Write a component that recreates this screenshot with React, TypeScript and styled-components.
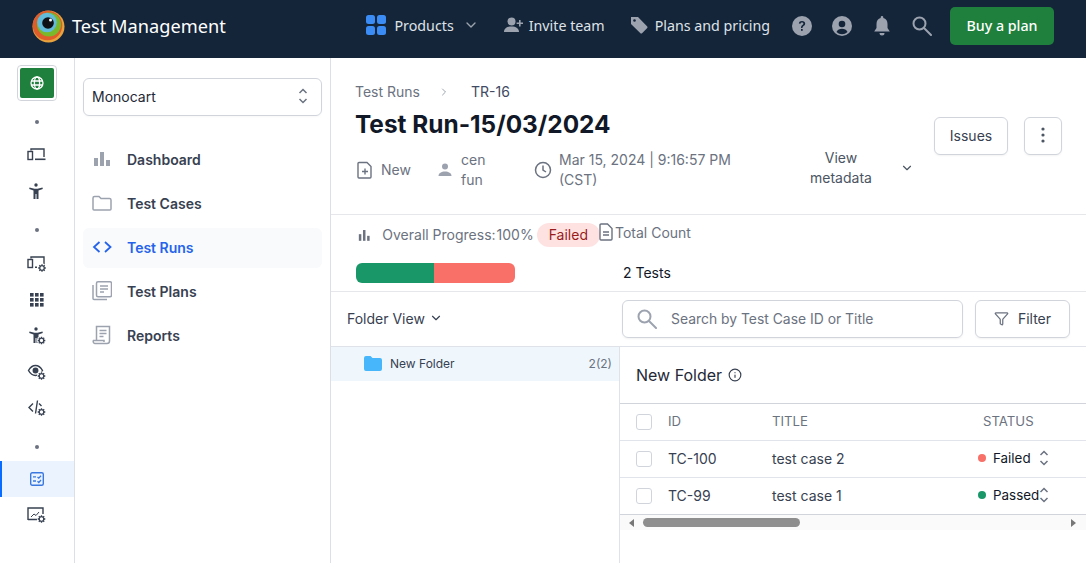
import styled, { createGlobalStyle } from "styled-components";
import { ChevronDown, ChevronRight, Info, Filter } from "lucide-react";

const GlobalStyle = createGlobalStyle`
  html, body {
    margin: 0;
    padding: 0;
    background: #fff;
    overflow: hidden;
  }
  * { box-sizing: border-box; }
  body { font-family: Inter, "Noto Sans", sans-serif; }
`;

const Page = styled.div`
  width: 1086px;
  height: 563px;
  display: flex;
  flex-direction: column;
  overflow: hidden;
`;

const Header = styled.header`
  height: 58px;
  flex: none;
  background: #14253a;
  display: flex;
  align-items: center;
  padding: 0 32px 6px 32px;
  color: #fff;
`;

const Brand = styled.div`
  display: flex;
  align-items: center;
  gap: 7px;
  font-family: "Noto Sans", sans-serif;
  font-size: 18.2px;
`;

const HeaderNav = styled.nav`
  margin-left: auto;
  display: flex;
  align-items: center;
  font-family: "Noto Sans", sans-serif;
  font-size: 14.25px;
`;

const HeaderLink = styled.span<{ $gap?: number; $mr?: number }>`
  display: flex;
  align-items: center;
  gap: ${(p) => p.$gap ?? 6}px;
  margin-right: ${(p) => p.$mr ?? 25}px;
  padding-bottom: 2px;
  color: #dfe2e7;
  white-space: nowrap;
`;

const HeaderIcon = styled.span<{ $mr?: number }>`
  display: flex;
  margin-right: ${(p) => p.$mr ?? 18}px;
`;

const BuyButton = styled.button`
  width: 104px;
  height: 38px;
  margin-left: 8px;
  padding: 0 0 2px;
  border: 0;
  border-radius: 5px;
  background: #1f7f3c;
  color: #fff;
  font-family: "Noto Sans", sans-serif;
  font-size: 14.25px;
  font-weight: 500;
`;

const Body = styled.div`
  flex: 1;
  display: flex;
  min-height: 0;
`;

const Rail = styled.aside`
  width: 75px;
  flex: none;
  border-right: 1px solid #dcdfe6;
  display: flex;
  flex-direction: column;
  align-items: center;
  padding-top: 7px;
`;

const GlobeFrame = styled.div`
  width: 40px;
  height: 36px;
  padding: 2px;
  margin: 0 1px 1px 0;
  border: 1px solid #d1d5db;
  border-radius: 4px;
`;

const GlobeButton = styled.div`
  width: 100%;
  height: 100%;
  background: #1f7f3c;
  border-radius: 2px;
  display: flex;
  align-items: center;
  justify-content: center;
  color: #fff;
`;

const RailDot = styled.i<{ $mb?: number; $mt?: number }>`
  width: 4px;
  height: 4px;
  flex: none;
  border-radius: 50%;
  background: #6b7280;
  margin: ${(p) => p.$mt ?? 18}px 0 ${(p) => p.$mb ?? 14}px;
`;

const RailItem = styled.div<{ $active?: boolean }>`
  width: 74px;
  height: 36px;
  flex: none;
  display: flex;
  align-items: center;
  justify-content: center;
  color: #374151;
  background: ${(p) => (p.$active ? "#ebf3ff" : "transparent")};
  border-left: 2px solid ${(p) => (p.$active ? "#0a6cff" : "transparent")};
  padding-right: 2px;
`;

const SideNav = styled.aside`
  width: 256px;
  flex: none;
  border-right: 1px solid #dcdfe6;
  padding: 20px 8px 0 8px;
`;

const ProjectSelect = styled.div`
  height: 38px;
  border: 1px solid #d1d5db;
  border-radius: 6px;
  display: flex;
  align-items: center;
  justify-content: space-between;
  padding: 0 13px 2px 8px;
  font-size: 14px;
  color: #1f2937;
  margin-bottom: 24px;
  box-shadow: 0 1px 2px rgba(0, 0, 0, 0.03);
`;

const SideLink = styled.div<{ $active?: boolean }>`
  height: 40px;
  margin-bottom: 4px;
  border-radius: 6px;
  display: flex;
  align-items: center;
  gap: 15px;
  padding: 0 0 2px 9px;
  font-size: 14px;
  font-weight: 600;
  color: ${(p) => (p.$active ? "#2563eb" : "#374151")};
  background: ${(p) => (p.$active ? "#f9fafb" : "transparent")};
`;

const SideIcon = styled.svg<{ $active?: boolean }>`
  width: 20px;
  height: 20px;
  flex: none;
  color: ${(p) => (p.$active ? "#2563eb" : "#9ca3af")};
`;

const Main = styled.main`
  flex: 1;
  min-width: 0;
  display: flex;
  flex-direction: column;
`;

const Summary = styled.section`
  height: 157px;
  flex: none;
  border-bottom: 1px solid #e5e7eb;
  padding: 24px 24px 0 24px;
  display: flex;
  justify-content: space-between;
`;

const SummaryLeft = styled.div`
  display: flex;
  flex-direction: column;
`;

const Crumbs = styled.div`
  display: flex;
  align-items: center;
  font-size: 14px;
  line-height: 20px;
  color: #6b7280;
`;

const CrumbSep = styled.span`
  display: flex;
  width: 51px;
  justify-content: center;
  padding-right: 2px;
  color: #9ca3af;
`;

const CrumbCurrent = styled.span`
  color: #3f4a63;
`;

const Title = styled.h1`
  margin: 6px 0 0;
  font-size: 24.4px;
  line-height: 32px;
  font-weight: 700;
  color: #111827;
`;

const MetaRow = styled.div`
  display: flex;
  align-items: center;
  margin-top: 8px;
  padding-left: 2px;
  font-size: 14px;
  line-height: 20px;
  color: #6b7280;
`;

const MetaItem = styled.div<{ $w: number; $gap?: number }>`
  width: ${(p) => p.$w}px;
  display: flex;
  align-items: center;
  gap: ${(p) => p.$gap ?? 6}px;
  flex: none;
`;

const ViewMeta = styled.div`
  display: flex;
  align-items: center;
  gap: 23px;
  margin: 0 0 4px 9px;
  color: #4b5563;
  text-align: center;
`;

const MetaLabel = styled.div`
  width: 72px;
`;

const SummaryActions = styled.div`
  display: flex;
  gap: 16px;
  margin-top: 35px;
`;

const GhostButton = styled.button<{ $w: number; $gap?: number }>`
  width: ${(p) => p.$w}px;
  height: 38px;
  border: 1px solid #d1d5db;
  border-radius: 6px;
  background: #fff;
  color: #374151;
  font-family: inherit;
  font-size: 14px;
  display: flex;
  align-items: center;
  justify-content: center;
  gap: ${(p) => p.$gap ?? 7}px;
  padding: 0 0 2px;
  box-shadow: 0 1px 2px rgba(0, 0, 0, 0.05);
`;

const Progress = styled.section`
  height: 77px;
  flex: none;
  border-bottom: 1px solid #e5e7eb;
  padding-left: 25px;
  display: flex;
`;

const ProgressCol = styled.div`
  width: 244px;
  flex: none;
`;

const ProgressHead = styled.div`
  display: flex;
  align-items: center;
  height: 23px;
  margin-top: 8px;
  padding-left: 2px;
  font-size: 14px;
  color: #6b7280;
  white-space: nowrap;
`;

const ProgressLabel = styled.span`
  margin-left: 11px;
`;

const ProgressValue = styled.span`
  margin-left: 1px;
`;

const FailedPill = styled.span`
  height: 24px;
  padding: 0 12px;
  border-radius: 12px;
  background: #fee2e2;
  color: #991b1b;
  margin-left: 3px;
  display: flex;
  align-items: center;
`;

const Bar = styled.div`
  width: 159px;
  height: 20px;
  margin-top: 17px;
  border-radius: 6px;
  overflow: hidden;
  display: flex;
`;

const BarPart = styled.div<{ $color: string; $w: number }>`
  width: ${(p) => p.$w}px;
  background: ${(p) => p.$color};
`;

const CountCol = styled.div`
  display: flex;
  flex-direction: column;
  font-size: 14px;
  margin-left: -1px;
`;

const CountHead = styled.div`
  height: 20px;
  margin-top: 7px;
  display: flex;
  align-items: center;
  gap: 2px;
  color: #6b7280;
`;

const CountValue = styled.div`
  margin-top: 21px;
  margin-left: 24px;
  line-height: 20px;
  color: #111827;
`;

const Toolbar = styled.section`
  height: 55px;
  flex: none;
  border-bottom: 1px solid #dfe3e9;
  display: flex;
  align-items: center;
  padding: 0 16px;
`;

const FolderView = styled.div`
  width: 275px;
  flex: none;
  display: flex;
  align-items: center;
  gap: 4px;
  padding-bottom: 2px;
  font-size: 14px;
  color: #374151;
`;

const SearchBox = styled.div`
  width: 341px;
  height: 38px;
  border: 1px solid #d1d5db;
  border-radius: 6px;
  display: flex;
  align-items: center;
  gap: 14px;
  padding-left: 14px;
  margin-right: 12px;
  font-size: 13.9px;
  color: #6b7280;
  box-shadow: 0 1px 2px rgba(0, 0, 0, 0.05);
`;

const Split = styled.section`
  flex: 1;
  display: flex;
  min-height: 0;
`;

const FolderPane = styled.div`
  width: 289px;
  flex: none;
  border-right: 1px solid #dfe3e9;
`;

const FolderRow = styled.div`
  height: 34px;
  background: #eff7fd;
  display: flex;
  align-items: center;
  padding: 0 7px 2px 33px;
  font-size: 12px;
  color: #374151;
`;

const FolderName = styled.span`
  margin-left: 8px;
  flex: 1;
`;

const FolderCount = styled.span`
  color: #6b7280;
`;

const CasesPane = styled.div`
  flex: 1;
  min-width: 0;
`;

const CasesTitle = styled.div`
  height: 56px;
  display: flex;
  align-items: center;
  gap: 6px;
  padding-left: 16px;
  font-size: 16px;
  color: #1f2937;
`;

const Row = styled.div<{ $head?: boolean }>`
  height: 37px;
  display: grid;
  grid-template-columns: 32px 104px 211px 1fr;
  align-items: center;
  border-top: 1px solid ${(p) => (p.$head ? "#d1d5db" : "#e1e4ea")};
  padding: 0 0 2px 16px;
  font-size: ${(p) => (p.$head ? 13.2 : 14)}px;
  color: ${(p) => (p.$head ? "#6b7280" : "#374151")};
`;

const Checkbox = styled.span`
  width: 16px;
  height: 16px;
  margin-top: 2px;
  border: 1px solid #d1d5db;
  border-radius: 3px;
  background: #fff;
`;

const StatusCell = styled.div`
  display: flex;
  align-items: center;
  margin-left: -5px;
  color: #111827;
`;

const StatusDot = styled.i<{ $color: string }>`
  width: 8px;
  height: 8px;
  border-radius: 50%;
  background: ${(p) => p.$color};
  margin-right: 7px;
  flex: none;
`;

const StatusText = styled.span`
  width: 46px;
  font-size: 13.4px;
`;

const ScrollTrack = styled.div`
  height: 16px;
  border-top: 1px solid #d1d5db;
  background: #fafafa;
  display: flex;
  align-items: center;
  padding: 0 10px 0 9px;
`;

const ScrollArrow = styled.i<{ $right?: boolean }>`
  width: 0;
  height: 0;
  border-top: 4px solid transparent;
  border-bottom: 4px solid transparent;
  border-${(p) => (p.$right ? "left" : "right")}: 5px solid #777;
`;

const ScrollThumb = styled.div`
  width: 157px;
  height: 9px;
  margin-left: 9px;
  margin-right: auto;
  border-radius: 5px;
  background: #8e8e8e;
`;

function Logo() {
  return (
    <svg width="33" height="33" viewBox="0 0 33 33">
      <circle cx="16.500" cy="16.500" r="16" fill="#e8a33d" />
      <circle cx="15.500" cy="15.500" r="14.800" fill="#df5d2b" />
      <circle cx="17" cy="14.500" r="12" fill="#7ab929" />
      <circle cx="15" cy="12.500" r="9.800" fill="#62bbd9" />
      <circle cx="16" cy="13" r="5.800" fill="#0e1116" />
      <circle cx="18.500" cy="10" r="1.500" fill="#fff" />
    </svg>
  );
}

function GridIcon() {
  return (
    <svg width="20" height="20" viewBox="0 0 20 20" fill="#3b8df5">
      <rect x="0" y="0" width="9" height="9" rx="2.500" />
      <rect x="11" y="0" width="9" height="9" rx="2.500" />
      <rect x="0" y="11" width="9" height="9" rx="2.500" />
      <rect x="11" y="11" width="9" height="9" rx="2.500" />
    </svg>
  );
}

function UserPlusIcon() {
  return (
    <svg width="20" height="16" viewBox="0 0 20 16" fill="#9ca3af">
      <circle cx="7.500" cy="4.500" r="4" />
      <path d="M0 15c0-3.500 3-5.500 7.500-5.500S15 11.500 15 15z" />
      <path d="M15 3h1.600v2.400H19V7h-2.400v2.400H15V7h-2.400V5.400H15z" />
    </svg>
  );
}

function TagIcon() {
  return (
    <svg width="18" height="18" viewBox="0 0 18 18" fill="#9ca3af">
      <path d="M1 1h7l9 9.200a1.500 1.500 0 0 1 0 2.100l-4.700 4.700a1.500 1.500 0 0 1-2.100 0L1 8z" />
      <circle cx="4.500" cy="4.500" r="1.300" fill="#14253a" />
    </svg>
  );
}

function HelpIcon() {
  return (
    <svg width="20" height="20" viewBox="0 0 20 20">
      <circle cx="10" cy="10" r="10" fill="#9ca3af" />
      <path d="M6.800 7.600C7 5.800 8.300 5 10 5c1.900 0 3.200 1.100 3.200 2.600 0 2.400-2.700 2.300-2.700 4.400H9c0-3 2.400-2.900 2.400-4.400 0-.7-.6-1.200-1.400-1.200-.9 0-1.400.5-1.500 1.300z" fill="#14253a" />
      <rect x="9" y="13" width="1.700" height="1.800" fill="#14253a" />
    </svg>
  );
}

function AccountIcon() {
  return (
    <svg width="20" height="20" viewBox="0 0 20 20">
      <circle cx="10" cy="10" r="10" fill="#9ca3af" />
      <circle cx="10" cy="8" r="3.300" fill="#14253a" />
      <path d="M4.500 16c1-2.300 3-3.200 5.500-3.200s4.500.9 5.500 3.200a8 8 0 0 1-11 0z" fill="#14253a" />
    </svg>
  );
}

function BellIcon() {
  return (
    <svg width="16" height="20" viewBox="0 0 16 20" fill="#9ca3af">
      <path d="M8 0c.8 0 1.300.6 1.300 1.400v.7C12 2.800 13.500 5 13.500 8v4l2.300 3.500H.2L2.500 12V8c0-3 1.500-5.200 4.200-5.900v-.7C6.700.6 7.200 0 8 0z" />
      <path d="M5.500 17h5a2.500 2.500 0 0 1-5 0z" />
    </svg>
  );
}

function SearchGlyph() {
  return (
    <svg width="20" height="20" viewBox="0 0 20 20" fill="none" stroke="#9ca3af" strokeWidth="2">
      <circle cx="7.500" cy="7.500" r="6" />
      <path d="M12 12l7 7" strokeLinecap="round" />
    </svg>
  );
}

function UpDownIcon() {
  return (
    <svg width="10" height="18" viewBox="0 0 10 18" fill="none" stroke="#6b7280" strokeWidth="1.500">
      <path d="M1.500 6L5 2.500 8.500 6M1.500 12L5 15.500 8.500 12" />
    </svg>
  );
}

function GlobeIcon() {
  return (
    <svg width="14" height="14" viewBox="0 0 14 14" fill="none" stroke="#fff" strokeWidth="1.300">
      <circle cx="7" cy="7" r="6" />
      <ellipse cx="7" cy="7" rx="2.600" ry="6" />
      <path d="M1 5h12M1 9h12" />
    </svg>
  );
}

function Gear({ x, y }: { x: number; y: number }) {
  return (
    <g transform={`translate(${x} ${y})`}>
      <circle r="4.600" fill="#fff" stroke="none" />
      <circle r="2.300" fill="none" stroke="#374151" strokeWidth="1.300" />
      <path d="M0-3.800V-2.400M0 3.800V2.400M-3.800 0H-2.400M3.800 0H2.400M-2.700-2.700l1 1M2.700 2.700l-1-1M-2.700 2.700l1-1M2.700-2.700l-1 1" stroke="#374151" strokeWidth="1.300" fill="none" />
    </g>
  );
}

function DevicesIcon({ gear }: { gear?: boolean }) {
  return (
    <svg width="20" height="18" viewBox="0 0 20 18" fill="none" stroke="#374151" strokeWidth="1.400">
      <path d="M4 3.500V2h13v8" />
      <rect x="1" y="4.500" width="4.500" height="8" />
      {gear ? <path d="M8 12.300h2" /> : <path d="M8 12.300h10.500" strokeWidth="1.600" />}
      {gear && <Gear x={15} y={13} />}
    </svg>
  );
}

function PersonIcon({ gear }: { gear?: boolean }) {
  return (
    <svg width="20" height="20" viewBox="0 0 20 20" fill="#374151">
      <circle cx="9" cy="3" r="1.700" />
      <path d="M2.500 5.600l5 1.200h3l5-1.200.3 1.300-4.300 1.500V17H9.500v-5h-1v5H6.500V8.400L2.200 6.900z" />
      {gear && <Gear x={14.500} y={14.500} />}
    </svg>
  );
}

function AppsIcon() {
  return (
    <svg width="14" height="14" viewBox="0 0 14 14" fill="#374151">
      {[0, 5, 10].flatMap((y) =>
        [0, 5, 10].map((x) => <rect key={`${x}-${y}`} x={x} y={y} width="3.600" height="3.600" />)
      )}
    </svg>
  );
}

function EyeGearIcon() {
  return (
    <svg width="20" height="20" viewBox="0 0 20 20" fill="none" stroke="#374151" strokeWidth="1.500">
      <path d="M1.500 8.500C3.500 5 6 3.500 8.500 3.500s5 1.500 7 5c-2 3.500-4.500 5-7 5s-5-1.500-7-5z" />
      <circle cx="8.500" cy="8.500" r="2.200" fill="#374151" />
      <Gear x={14.500} y={14} />
    </svg>
  );
}

function CodeGearIcon() {
  return (
    <svg width="20" height="20" viewBox="0 0 20 20" fill="none" stroke="#374151" strokeWidth="1.400">
      <path d="M6 5.500L2 9.500l4 4M8.500 15.500l2-13M12 5.500l2.500 2.500" />
      <Gear x={14.500} y={14} />
    </svg>
  );
}

function ChecklistIcon() {
  return (
    <svg width="14" height="14" viewBox="0 0 14 14">
      <rect x="0.700" y="0.700" width="12.600" height="12.600" rx="1.500" fill="none" stroke="#3a78e0" strokeWidth="1.400" />
      <path d="M3 4.800h3M3 9h3" stroke="#3a78e0" strokeWidth="1.300" />
      <path d="M7.500 5l1.300 1.200L11 3.800M7.500 9.300l1.300 1.200L11 8" fill="none" stroke="#3a78e0" strokeWidth="1.300" />
    </svg>
  );
}

function ChartGearIcon() {
  return (
    <svg width="20" height="18" viewBox="0 0 20 18" fill="none" stroke="#374151" strokeWidth="1.400">
      <path d="M1 14V2h15v6M1 13.500h9" />
      <path d="M4 11l3-3 2 1.500 3-3.500" strokeWidth="1" />
      <Gear x={14.500} y={13} />
    </svg>
  );
}

function ChartIcon() {
  return (
    <SideIcon viewBox="0 0 20 20" fill="currentColor">
      <rect x="2" y="9" width="4" height="8" />
      <rect x="8" y="3" width="4" height="14" />
      <rect x="14" y="11" width="4" height="6" />
    </SideIcon>
  );
}

function FolderIcon() {
  return (
    <SideIcon viewBox="0 0 20 20" fill="none" stroke="currentColor" strokeWidth="1.500">
      <path d="M1 5a1.500 1.500 0 0 1 1.500-1.500h4.500l2 2h8.500A1.500 1.500 0 0 1 19 7v9a1 1 0 0 1-1 1H2a1 1 0 0 1-1-1z" />
    </SideIcon>
  );
}

function CodeIcon() {
  return (
    <SideIcon $active viewBox="0 0 20 20" fill="none" stroke="currentColor" strokeWidth="1.800">
      <path d="M7.500 5l-5.500 5 5.500 5M13 5l5.500 5-5.500 5" />
    </SideIcon>
  );
}

function PlansIcon() {
  return (
    <SideIcon viewBox="0 0 20 20" fill="none" stroke="currentColor" strokeWidth="1.500">
      <rect x="4.500" y="0.800" width="15" height="15" rx="1.500" />
      <path d="M8 5h8M8 8h8M8 11h4" />
      <path d="M1 4v13.500a1 1 0 0 0 1 1h13" />
    </SideIcon>
  );
}

function ReportsIcon() {
  return (
    <SideIcon viewBox="0 0 20 20" fill="none" stroke="currentColor" strokeWidth="1.500">
      <path d="M4.500 15V1.500h13V16a2.500 2.500 0 0 1-2.500 2.500H3.500A2 2 0 0 1 1.500 15.500h10.500v1.500" />
      <path d="M7.500 5.500h7M7.500 8.500h7M7.500 11.500h4" />
    </SideIcon>
  );
}

function FilePlusIcon() {
  return (
    <svg width="16" height="18" viewBox="0 0 16 18" fill="none" stroke="#6b7280" strokeWidth="1.400">
      <path d="M2 1.500h8l4 4V16a1 1 0 0 1-1 1H2a1 1 0 0 1-1-1V2.500a1 1 0 0 1 1-1z" />
      <path d="M8 7.500v6M5 10.500h6" />
    </svg>
  );
}

function PersonSmallIcon() {
  return (
    <svg width="16" height="16" viewBox="0 0 16 16" fill="#9ca3af">
      <circle cx="8" cy="4.500" r="3" />
      <path d="M1.500 14c0-3 3-4.500 6.500-4.500s6.500 1.500 6.500 4.500z" />
    </svg>
  );
}

function ClockIcon() {
  return (
    <svg width="18" height="18" viewBox="0 0 18 18" fill="none" stroke="#6b7280" strokeWidth="1.500">
      <circle cx="9" cy="9" r="7.500" />
      <path d="M9 4.500V9l3 2" />
    </svg>
  );
}

function BarsSmallIcon() {
  return (
    <svg width="16" height="16" viewBox="0 0 16 16" fill="#6b7280">
      <rect x="1" y="7" width="3" height="8" />
      <rect x="6" y="2" width="3" height="13" />
      <rect x="11" y="9" width="3" height="6" />
    </svg>
  );
}

function DocIcon() {
  return (
    <svg width="14" height="18" viewBox="0 0 14 18" fill="none" stroke="#6b7280" strokeWidth="1.400">
      <path d="M2 1h6.500L13 5.500V16a1 1 0 0 1-1 1H2a1 1 0 0 1-1-1V2a1 1 0 0 1 1-1z" />
      <path d="M4 9h6M4 12h6" />
    </svg>
  );
}

function DotsIcon() {
  return (
    <svg width="4" height="16" viewBox="0 0 4 16" fill="#4b5563">
      <circle cx="2" cy="2" r="1.600" />
      <circle cx="2" cy="8" r="1.600" />
      <circle cx="2" cy="14" r="1.600" />
    </svg>
  );
}

function SolidFolderIcon() {
  return (
    <svg width="18" height="15" viewBox="0 0 18 15" fill="#47b6fb">
      <path d="M0 2a2 2 0 0 1 2-2h4.500l2 2H16a2 2 0 0 1 2 2v9a2 2 0 0 1-2 2H2a2 2 0 0 1-2-2z" />
    </svg>
  );
}

const cases = [
  { id: "TC-100", title: "test case 2", status: "Failed", color: "#f87068" },
  { id: "TC-99", title: "test case 1", status: "Passed", color: "#1a9768" },
];

export default function App() {
  return (
    <Page>
      <GlobalStyle />
      <Header>
        <Brand>
          <Logo />
          Test Management
        </Brand>
        <HeaderNav>
          <HeaderLink $gap={9} $mr={25}>
            <GridIcon />
            Products
            <ChevronDown size={16} color="#9ca3af" />
          </HeaderLink>
          <HeaderLink $gap={5}>
            <UserPlusIcon />
            Invite team
          </HeaderLink>
          <HeaderLink $gap={7} $mr={22}>
            <TagIcon />
            Plans and pricing
          </HeaderLink>
          <HeaderIcon $mr={20}>
            <HelpIcon />
          </HeaderIcon>
          <HeaderIcon $mr={22}>
            <AccountIcon />
          </HeaderIcon>
          <HeaderIcon $mr={22}>
            <BellIcon />
          </HeaderIcon>
          <HeaderIcon $mr={10}>
            <SearchGlyph />
          </HeaderIcon>
          <BuyButton>Buy a plan</BuyButton>
        </HeaderNav>
      </Header>
      <Body>
        <Rail>
          <GlobeFrame>
            <GlobeButton>
              <GlobeIcon />
            </GlobeButton>
          </GlobeFrame>
          <RailDot />
          <RailItem><DevicesIcon /></RailItem>
          <RailItem><PersonIcon /></RailItem>
          <RailDot />
          <RailItem><DevicesIcon gear /></RailItem>
          <RailItem><AppsIcon /></RailItem>
          <RailItem><PersonIcon gear /></RailItem>
          <RailItem><EyeGearIcon /></RailItem>
          <RailItem><CodeGearIcon /></RailItem>
          <RailDot $mt={19} $mb={12} />
          <RailItem $active><ChecklistIcon /></RailItem>
          <RailItem><ChartGearIcon /></RailItem>
        </Rail>
        <SideNav>
          <ProjectSelect>
            Monocart
            <UpDownIcon />
          </ProjectSelect>
          <SideLink><ChartIcon />Dashboard</SideLink>
          <SideLink><FolderIcon />Test Cases</SideLink>
          <SideLink $active><CodeIcon />Test Runs</SideLink>
          <SideLink><PlansIcon />Test Plans</SideLink>
          <SideLink><ReportsIcon />Reports</SideLink>
        </SideNav>
        <Main>
          <Summary>
            <SummaryLeft>
              <Crumbs>
                Test Runs
                <CrumbSep><ChevronRight size={12} /></CrumbSep>
                <CrumbCurrent>TR-16</CrumbCurrent>
              </Crumbs>
              <Title>Test Run-15/03/2024</Title>
              <MetaRow>
                <MetaItem $w={80} $gap={8}><FilePlusIcon />New</MetaItem>
                <MetaItem $w={97} $gap={8}><PersonSmallIcon /><span>cen<br />fun</span></MetaItem>
                <MetaItem $w={262} $gap={7}>
                  <ClockIcon />
                  <span>Mar 15, 2024 | 9:16:57 PM<br />(CST)</span>
                </MetaItem>
                <ViewMeta>
                  <MetaLabel>View metadata</MetaLabel>
                  <ChevronDown size={14} />
                </ViewMeta>
              </MetaRow>
            </SummaryLeft>
            <SummaryActions>
              <GhostButton $w={74}>Issues</GhostButton>
              <GhostButton $w={38}><DotsIcon /></GhostButton>
            </SummaryActions>
          </Summary>
          <Progress>
            <ProgressCol>
              <ProgressHead>
                <BarsSmallIcon />
                <ProgressLabel>Overall Progress:</ProgressLabel>
                <ProgressValue>100%</ProgressValue>
                <FailedPill>Failed</FailedPill>
              </ProgressHead>
              <Bar>
                <BarPart $color="#1a9768" $w={78} />
                <BarPart $color="#f87068" $w={81} />
              </Bar>
            </ProgressCol>
            <CountCol>
              <CountHead><DocIcon />Total Count</CountHead>
              <CountValue>2 Tests</CountValue>
            </CountCol>
          </Progress>
          <Toolbar>
            <FolderView>
              Folder View
              <ChevronDown size={14} />
            </FolderView>
            <SearchBox>
              <SearchGlyph />
              Search by Test Case ID or Title
            </SearchBox>
            <GhostButton $w={95} $gap={9}>
              <Filter size={15} color="#6b7280" />
              Filter
            </GhostButton>
          </Toolbar>
          <Split>
            <FolderPane>
              <FolderRow>
                <SolidFolderIcon />
                <FolderName>New Folder</FolderName>
                <FolderCount>2(2)</FolderCount>
              </FolderRow>
            </FolderPane>
            <CasesPane>
              <CasesTitle>
                New Folder
                <Info size={14} color="#374151" />
              </CasesTitle>
              <Row $head>
                <Checkbox />
                <span>ID</span>
                <span>TITLE</span>
                <span>STATUS</span>
              </Row>
              {cases.map((c) => (
                <Row key={c.id}>
                  <Checkbox />
                  <span>{c.id}</span>
                  <span>{c.title}</span>
                  <StatusCell>
                    <StatusDot $color={c.color} />
                    <StatusText>{c.status}</StatusText>
                    <UpDownIcon />
                  </StatusCell>
                </Row>
              ))}
              <ScrollTrack>
                <ScrollArrow />
                <ScrollThumb />
                <ScrollArrow $right />
              </ScrollTrack>
            </CasesPane>
          </Split>
        </Main>
      </Body>
    </Page>
  );
}
